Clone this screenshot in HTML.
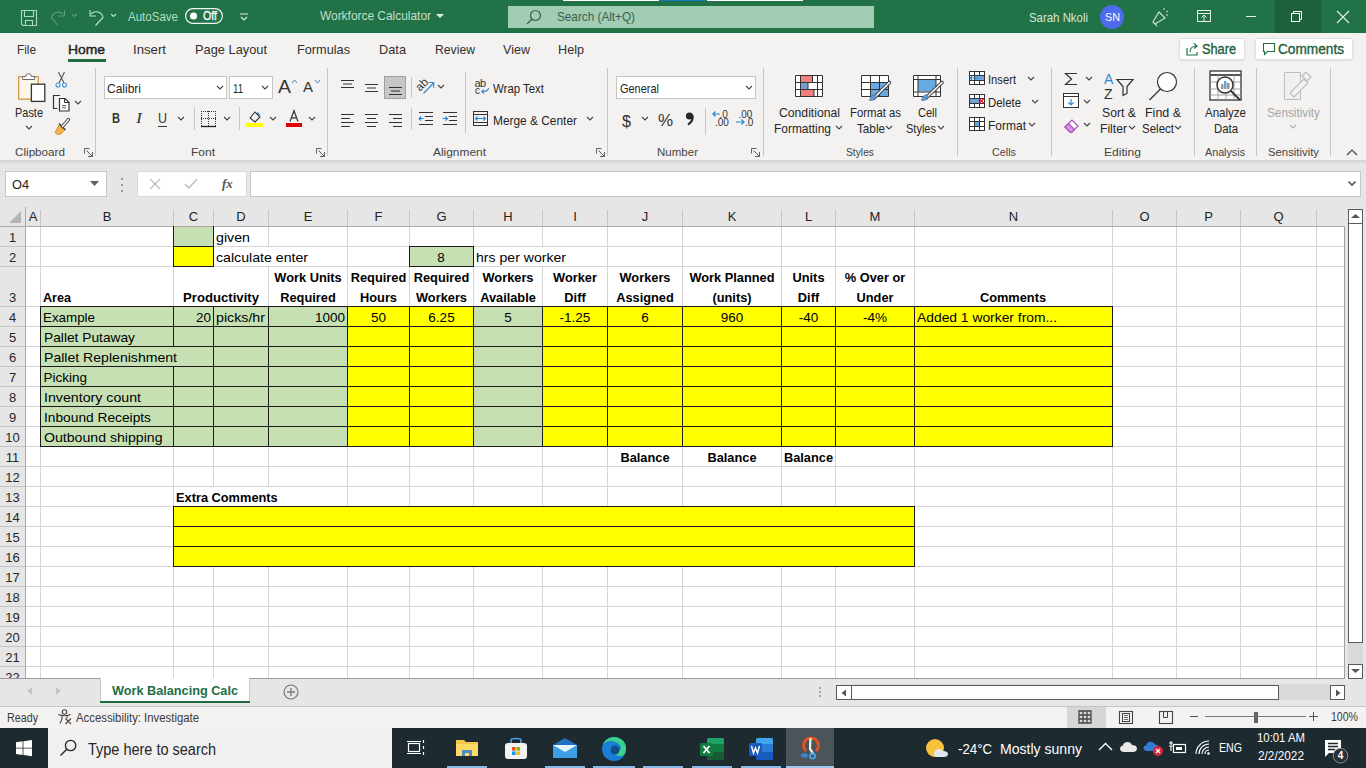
<!DOCTYPE html><html><head><meta charset="utf-8"><style>
html,body{margin:0;padding:0;width:1366px;height:768px;overflow:hidden;background:#fff;}
body{position:relative;font-family:"Liberation Sans",sans-serif;}
div{position:absolute;box-sizing:border-box;}
</style></head><body>
<div style="left:0px;top:0px;width:1366px;height:34px;background:#217247;"></div>
<div style="left:563px;top:0px;width:96px;height:1px;background:#ffffff;"></div>
<div style="left:660px;top:0px;width:46px;height:1px;background:#1a75b8;"></div>
<div style="left:707px;top:0px;width:96px;height:1px;background:#ffffff;"></div>
<svg style="position:absolute;left:10px;top:2px;" width="120" height="30" viewBox="0 0 120 30"><g fill="none" stroke-width="1.1"><path d="M11.5 8.5h15v15h-13.5l-1.5-1.5z M14.5 8.5v6h9v-6 M15.5 23.5v-5h7v5" stroke="#aadcbb"/><path d="M53 12A7 7 0 0 0 41.5 15.5L48 23.5 M54.5 8v6h-6" stroke="#5f9d77"/><path d="M62 12l2.5 2.5 2.5-2.5" stroke="#5f9d77"/><path d="M81 12A7 7 0 0 1 93 15.5L85.5 23.5 M80 8v6h6" stroke="#b8e4c6"/><path d="M101 12l2.5 2.5 2.5-2.5" stroke="#b8e4c6"/></g></svg>
<div style="left:128.00px;top:10.23px;font-size:13px;line-height:14.521px;color:#b2dcc0;transform:scaleX(0.8869);transform-origin:0 0;white-space:pre;">AutoSave</div>
<svg style="position:absolute;left:185px;top:8px;" width="38" height="16" viewBox="0 0 38 16"><rect x="0.6" y="0.6" width="36.8" height="14.8" rx="7.4" fill="none" stroke="#f0f6f2" stroke-width="1.2"/><circle cx="8.5" cy="8" r="3.6" fill="#fff"/></svg>
<div style="left:203.00px;top:10.14px;font-size:12px;line-height:13.404px;color:#fff;transform:scaleX(0.8869);transform-origin:0 0;white-space:pre;-webkit-text-stroke:0.3px #fff;">Off</div>
<svg style="position:absolute;left:239px;top:12px;" width="10" height="10" viewBox="0 0 10 10"><path d="M1 2h8 M2 5l3 3 3-3" fill="none" stroke="#e0eee5" stroke-width="1.1"/></svg>
<div style="left:320.00px;top:9.23px;font-size:13px;line-height:14.521px;color:#c3dfcd;transform:scaleX(0.9163);transform-origin:0 0;white-space:pre;">Workforce Calculator</div>
<svg style="position:absolute;left:436px;top:14px;" width="8" height="6" viewBox="0 0 8 6"><path d="M0 0h8l-4 4z" fill="#dfeee5"/></svg>
<div style="left:508px;top:6px;width:366px;height:22px;background:#a0cdb4;"></div>
<svg style="position:absolute;left:524px;top:8px;" width="20" height="18" viewBox="0 0 20 18"><circle cx="11.5" cy="7.5" r="5" fill="none" stroke="#3d5e4a" stroke-width="1.2"/><path d="M8 11l-5 5" stroke="#3d5e4a" stroke-width="1.3"/></svg>
<div style="left:557.00px;top:10.23px;font-size:13px;line-height:14.521px;color:#3e5f4b;transform:scaleX(0.9034);transform-origin:0 0;white-space:pre;">Search (Alt+Q)</div>
<div style="left:1029.00px;top:10.73px;font-size:13px;line-height:14.521px;color:#d3e7da;transform:scaleX(0.8780);transform-origin:0 0;white-space:pre;">Sarah Nkoli</div>
<svg style="position:absolute;left:1100px;top:5px;" width="24" height="24" viewBox="0 0 24 24"><circle cx="12" cy="12" r="12" fill="#4f6bed"/></svg>
<div style="left:1104.50px;top:11.04px;font-size:11px;line-height:12.287px;color:#fff;transform:scaleX(0.9816);transform-origin:0 0;white-space:pre;">SN</div>
<svg style="position:absolute;left:1150px;top:7px;" width="20" height="20" viewBox="0 0 20 20"><path d="M3 15l2 2 10-6-6-6z M5 17l2 2" fill="none" stroke="#cfe3d6" stroke-width="1.1"/><path d="M14 3v-2 M16 5l2-1 M16 8h2" stroke="#cfe3d6" stroke-width="1"/></svg>
<svg style="position:absolute;left:1196px;top:9px;" width="18" height="15" viewBox="0 0 18 15"><rect x="1.5" y="1.5" width="13" height="11" fill="none" stroke="#e3efe8" stroke-width="1"/><path d="M1.5 4.5h13 M8 12v-6 M5.5 8.5l2.5-2.5 2.5 2.5" fill="none" stroke="#e3efe8" stroke-width="1"/></svg>
<div style="left:1246px;top:16px;width:10px;height:1px;background:#e8f2ec;"></div>
<div style="left:1275px;top:0px;width:46px;height:33px;background:#1c6139;"></div>
<svg style="position:absolute;left:1290px;top:10px;" width="14" height="14" viewBox="0 0 14 14"><rect x="1.5" y="3.5" width="8" height="8" fill="none" stroke="#fff" stroke-width="1"/><path d="M3.5 3.5v-2h8v8h-2" fill="none" stroke="#fff" stroke-width="1"/></svg>
<svg style="position:absolute;left:1336px;top:10px;" width="14" height="14" viewBox="0 0 14 14"><path d="M1 1l12 12 M13 1l-12 12" stroke="#e8f2ec" stroke-width="1.1"/></svg>
<div style="left:0px;top:33px;width:1366px;height:127px;background:#f3f2f1;"></div>
<div style="left:17.00px;top:43.23px;font-size:13px;line-height:14.521px;color:#323130;transform:scaleX(0.9070);transform-origin:0 0;white-space:pre;">File</div>
<div style="left:68.00px;top:43.23px;font-size:13px;line-height:14.521px;color:#201f1e;transform:scaleX(1.0669);transform-origin:0 0;white-space:pre;-webkit-text-stroke:0.4px #201f1e;">Home</div>
<div style="left:133.00px;top:43.23px;font-size:13px;line-height:14.521px;color:#323130;transform:scaleX(1.0150);transform-origin:0 0;white-space:pre;">Insert</div>
<div style="left:195.00px;top:43.23px;font-size:13px;line-height:14.521px;color:#323130;transform:scaleX(0.9862);transform-origin:0 0;white-space:pre;">Page Layout</div>
<div style="left:297.00px;top:43.23px;font-size:13px;line-height:14.521px;color:#323130;transform:scaleX(0.9782);transform-origin:0 0;white-space:pre;">Formulas</div>
<div style="left:379.00px;top:43.23px;font-size:13px;line-height:14.521px;color:#323130;transform:scaleX(0.9832);transform-origin:0 0;white-space:pre;">Data</div>
<div style="left:435.00px;top:43.23px;font-size:13px;line-height:14.521px;color:#323130;transform:scaleX(0.9384);transform-origin:0 0;white-space:pre;">Review</div>
<div style="left:503.00px;top:43.23px;font-size:13px;line-height:14.521px;color:#323130;transform:scaleX(0.9662);transform-origin:0 0;white-space:pre;">View</div>
<div style="left:558.00px;top:43.23px;font-size:13px;line-height:14.521px;color:#323130;transform:scaleX(0.9724);transform-origin:0 0;white-space:pre;">Help</div>
<div style="left:68px;top:59px;width:38px;height:3px;background:#1e6e42;"></div>
<div style="left:1179px;top:38px;width:66px;height:22px;background:#ffffff;border:1px solid #e1dfdd;border-radius:3px;box-shadow:0 1px 2px rgba(0,0,0,0.08);"></div>
<svg style="position:absolute;left:1185px;top:42px;" width="14" height="14" viewBox="0 0 14 14"><path d="M2 6v7h10v-3" fill="none" stroke="#1e6e42" stroke-width="1.2"/><path d="M5 10c0-4 3-6 7-6 M9 1.5l3 2.5-3 2.5" fill="none" stroke="#1e6e42" stroke-width="1.2"/></svg>
<div style="left:1202.00px;top:42.33px;font-size:14px;line-height:15.638px;color:#1e5e3b;transform:scaleX(0.9101);transform-origin:0 0;white-space:pre;-webkit-text-stroke:0.35px #1e5e3b;">Share</div>
<div style="left:1255px;top:38px;width:98px;height:22px;background:#ffffff;border:1px solid #e1dfdd;border-radius:3px;box-shadow:0 1px 2px rgba(0,0,0,0.08);"></div>
<svg style="position:absolute;left:1262px;top:42px;" width="14" height="14" viewBox="0 0 14 14"><path d="M1.5 1.5h11v8h-7l-3 3v-3h-1z" fill="none" stroke="#1e6e42" stroke-width="1.1"/></svg>
<div style="left:1278.00px;top:42.33px;font-size:14px;line-height:15.638px;color:#1e5e3b;transform:scaleX(0.9751);transform-origin:0 0;white-space:pre;-webkit-text-stroke:0.35px #1e5e3b;">Comments</div>
<div style="left:0px;top:160px;width:1366px;height:47px;background:#e6e6e6;"></div>
<div style="left:0px;top:160px;width:1366px;height:4px;background:linear-gradient(#d2d2d2,#e6e6e6);"></div>
<div style="left:5px;top:171px;width:102px;height:26px;background:#fff;border:1px solid #c8c8c8;"></div>
<div style="left:12.00px;top:178.24px;font-size:13px;line-height:14.521px;color:#222;transform:scaleX(0.9803);transform-origin:0 0;white-space:pre;">O4</div>
<svg style="position:absolute;left:90px;top:181px;" width="10" height="6" viewBox="0 0 10 6"><path d="M0 0h9l-4.5 5z" fill="#606060"/></svg>
<div style="left:121px;top:178px;width:2px;height:2px;background:#9a9a9a;"></div>
<div style="left:121px;top:184px;width:2px;height:2px;background:#9a9a9a;"></div>
<div style="left:121px;top:190px;width:2px;height:2px;background:#9a9a9a;"></div>
<div style="left:137px;top:171px;width:110px;height:26px;background:#fff;border:1px solid #d8d8d8;"></div>
<svg style="position:absolute;left:148px;top:177px;" width="14" height="14" viewBox="0 0 14 14"><path d="M2 2l10 10 M12 2l-10 10" stroke="#bdbdbd" stroke-width="1.2"/></svg>
<svg style="position:absolute;left:183px;top:177px;" width="16" height="14" viewBox="0 0 16 14"><path d="M2 7l4 4 8-9" fill="none" stroke="#bdbdbd" stroke-width="1.5"/></svg>
<div style="left:222.00px;top:177.24px;font-size:13px;line-height:14.521px;color:#555;white-space:pre;font-style:italic;font-family:'Liberation Serif',serif;font-weight:bold;">fx</div>
<div style="left:250px;top:171px;width:1111px;height:26px;background:#fff;border:1px solid #c6c6c6;"></div>
<svg style="position:absolute;left:1347px;top:180px;" width="10" height="7" viewBox="0 0 10 7"><path d="M1.5 1.5l3.5 3.5 3.5-3.5" fill="none" stroke="#555" stroke-width="1.6"/></svg>
<div style="left:0px;top:207px;width:1366px;height:471px;background:#ffffff;"></div>
<div style="left:0px;top:207px;width:1345px;height:20px;background:#e6e6e6;"></div>
<div style="left:0px;top:207px;width:25px;height:471px;background:#e6e6e6;"></div>
<div style="left:26px;top:246px;width:1319px;height:1px;background:#d4d4d4;"></div>
<div style="left:26px;top:266px;width:1319px;height:1px;background:#d4d4d4;"></div>
<div style="left:26px;top:306px;width:1319px;height:1px;background:#d4d4d4;"></div>
<div style="left:26px;top:326px;width:1319px;height:1px;background:#d4d4d4;"></div>
<div style="left:26px;top:346px;width:1319px;height:1px;background:#d4d4d4;"></div>
<div style="left:26px;top:366px;width:1319px;height:1px;background:#d4d4d4;"></div>
<div style="left:26px;top:386px;width:1319px;height:1px;background:#d4d4d4;"></div>
<div style="left:26px;top:406px;width:1319px;height:1px;background:#d4d4d4;"></div>
<div style="left:26px;top:426px;width:1319px;height:1px;background:#d4d4d4;"></div>
<div style="left:26px;top:446px;width:1319px;height:1px;background:#d4d4d4;"></div>
<div style="left:26px;top:466px;width:1319px;height:1px;background:#d4d4d4;"></div>
<div style="left:26px;top:486px;width:1319px;height:1px;background:#d4d4d4;"></div>
<div style="left:26px;top:506px;width:1319px;height:1px;background:#d4d4d4;"></div>
<div style="left:26px;top:526px;width:1319px;height:1px;background:#d4d4d4;"></div>
<div style="left:26px;top:546px;width:1319px;height:1px;background:#d4d4d4;"></div>
<div style="left:26px;top:566px;width:1319px;height:1px;background:#d4d4d4;"></div>
<div style="left:26px;top:586px;width:1319px;height:1px;background:#d4d4d4;"></div>
<div style="left:26px;top:606px;width:1319px;height:1px;background:#d4d4d4;"></div>
<div style="left:26px;top:626px;width:1319px;height:1px;background:#d4d4d4;"></div>
<div style="left:26px;top:646px;width:1319px;height:1px;background:#d4d4d4;"></div>
<div style="left:26px;top:666px;width:1319px;height:1px;background:#d4d4d4;"></div>
<div style="left:40px;top:227px;width:1px;height:451px;background:#d4d4d4;"></div>
<div style="left:173px;top:227px;width:1px;height:451px;background:#d4d4d4;"></div>
<div style="left:213px;top:227px;width:1px;height:451px;background:#d4d4d4;"></div>
<div style="left:268px;top:227px;width:1px;height:451px;background:#d4d4d4;"></div>
<div style="left:347px;top:227px;width:1px;height:451px;background:#d4d4d4;"></div>
<div style="left:409px;top:227px;width:1px;height:451px;background:#d4d4d4;"></div>
<div style="left:473px;top:227px;width:1px;height:451px;background:#d4d4d4;"></div>
<div style="left:542px;top:227px;width:1px;height:451px;background:#d4d4d4;"></div>
<div style="left:607px;top:227px;width:1px;height:451px;background:#d4d4d4;"></div>
<div style="left:682px;top:227px;width:1px;height:451px;background:#d4d4d4;"></div>
<div style="left:781px;top:227px;width:1px;height:451px;background:#d4d4d4;"></div>
<div style="left:835px;top:227px;width:1px;height:451px;background:#d4d4d4;"></div>
<div style="left:914px;top:227px;width:1px;height:451px;background:#d4d4d4;"></div>
<div style="left:1112px;top:227px;width:1px;height:451px;background:#d4d4d4;"></div>
<div style="left:1176px;top:227px;width:1px;height:451px;background:#d4d4d4;"></div>
<div style="left:1240px;top:227px;width:1px;height:451px;background:#d4d4d4;"></div>
<div style="left:1316px;top:227px;width:1px;height:451px;background:#d4d4d4;"></div>
<div style="left:0px;top:226px;width:1345px;height:1px;background:#ababab;"></div>
<div style="left:25px;top:207px;width:1px;height:471px;background:#ababab;"></div>
<div style="left:40px;top:210px;width:1px;height:16px;background:#c6c6c6;"></div>
<div style="left:173px;top:210px;width:1px;height:16px;background:#c6c6c6;"></div>
<div style="left:213px;top:210px;width:1px;height:16px;background:#c6c6c6;"></div>
<div style="left:268px;top:210px;width:1px;height:16px;background:#c6c6c6;"></div>
<div style="left:347px;top:210px;width:1px;height:16px;background:#c6c6c6;"></div>
<div style="left:409px;top:210px;width:1px;height:16px;background:#c6c6c6;"></div>
<div style="left:473px;top:210px;width:1px;height:16px;background:#c6c6c6;"></div>
<div style="left:542px;top:210px;width:1px;height:16px;background:#c6c6c6;"></div>
<div style="left:607px;top:210px;width:1px;height:16px;background:#c6c6c6;"></div>
<div style="left:682px;top:210px;width:1px;height:16px;background:#c6c6c6;"></div>
<div style="left:781px;top:210px;width:1px;height:16px;background:#c6c6c6;"></div>
<div style="left:835px;top:210px;width:1px;height:16px;background:#c6c6c6;"></div>
<div style="left:914px;top:210px;width:1px;height:16px;background:#c6c6c6;"></div>
<div style="left:1112px;top:210px;width:1px;height:16px;background:#c6c6c6;"></div>
<div style="left:1176px;top:210px;width:1px;height:16px;background:#c6c6c6;"></div>
<div style="left:1240px;top:210px;width:1px;height:16px;background:#c6c6c6;"></div>
<div style="left:1316px;top:210px;width:1px;height:16px;background:#c6c6c6;"></div>
<div style="left:0px;top:246px;width:25px;height:1px;background:#c6c6c6;"></div>
<div style="left:0px;top:266px;width:25px;height:1px;background:#c6c6c6;"></div>
<div style="left:0px;top:306px;width:25px;height:1px;background:#c6c6c6;"></div>
<div style="left:0px;top:326px;width:25px;height:1px;background:#c6c6c6;"></div>
<div style="left:0px;top:346px;width:25px;height:1px;background:#c6c6c6;"></div>
<div style="left:0px;top:366px;width:25px;height:1px;background:#c6c6c6;"></div>
<div style="left:0px;top:386px;width:25px;height:1px;background:#c6c6c6;"></div>
<div style="left:0px;top:406px;width:25px;height:1px;background:#c6c6c6;"></div>
<div style="left:0px;top:426px;width:25px;height:1px;background:#c6c6c6;"></div>
<div style="left:0px;top:446px;width:25px;height:1px;background:#c6c6c6;"></div>
<div style="left:0px;top:466px;width:25px;height:1px;background:#c6c6c6;"></div>
<div style="left:0px;top:486px;width:25px;height:1px;background:#c6c6c6;"></div>
<div style="left:0px;top:506px;width:25px;height:1px;background:#c6c6c6;"></div>
<div style="left:0px;top:526px;width:25px;height:1px;background:#c6c6c6;"></div>
<div style="left:0px;top:546px;width:25px;height:1px;background:#c6c6c6;"></div>
<div style="left:0px;top:566px;width:25px;height:1px;background:#c6c6c6;"></div>
<div style="left:0px;top:586px;width:25px;height:1px;background:#c6c6c6;"></div>
<div style="left:0px;top:606px;width:25px;height:1px;background:#c6c6c6;"></div>
<div style="left:0px;top:626px;width:25px;height:1px;background:#c6c6c6;"></div>
<div style="left:0px;top:646px;width:25px;height:1px;background:#c6c6c6;"></div>
<div style="left:0px;top:666px;width:25px;height:1px;background:#c6c6c6;"></div>
<svg style="position:absolute;left:8px;top:210px;" width="14" height="14" viewBox="0 0 14 14"><path d="M13 1v12h-12z" fill="#b4b4b4"/></svg>
<div style="left:28.66px;top:210.24px;font-size:13px;line-height:14.521px;color:#222;white-space:pre;">A</div>
<div style="left:102.66px;top:210.24px;font-size:13px;line-height:14.521px;color:#222;white-space:pre;">B</div>
<div style="left:188.81px;top:210.24px;font-size:13px;line-height:14.521px;color:#222;white-space:pre;">C</div>
<div style="left:236.31px;top:210.24px;font-size:13px;line-height:14.521px;color:#222;white-space:pre;">D</div>
<div style="left:303.66px;top:210.24px;font-size:13px;line-height:14.521px;color:#222;white-space:pre;">E</div>
<div style="left:374.53px;top:210.24px;font-size:13px;line-height:14.521px;color:#222;white-space:pre;">F</div>
<div style="left:436.44px;top:210.24px;font-size:13px;line-height:14.521px;color:#222;white-space:pre;">G</div>
<div style="left:503.31px;top:210.24px;font-size:13px;line-height:14.521px;color:#222;white-space:pre;">H</div>
<div style="left:573.19px;top:210.24px;font-size:13px;line-height:14.521px;color:#222;white-space:pre;">I</div>
<div style="left:641.75px;top:210.24px;font-size:13px;line-height:14.521px;color:#222;white-space:pre;">J</div>
<div style="left:727.66px;top:210.24px;font-size:13px;line-height:14.521px;color:#222;white-space:pre;">K</div>
<div style="left:804.88px;top:210.24px;font-size:13px;line-height:14.521px;color:#222;white-space:pre;">L</div>
<div style="left:869.59px;top:210.24px;font-size:13px;line-height:14.521px;color:#222;white-space:pre;">M</div>
<div style="left:1008.81px;top:210.24px;font-size:13px;line-height:14.521px;color:#222;white-space:pre;">N</div>
<div style="left:1139.44px;top:210.24px;font-size:13px;line-height:14.521px;color:#222;white-space:pre;">O</div>
<div style="left:1204.16px;top:210.24px;font-size:13px;line-height:14.521px;color:#222;white-space:pre;">P</div>
<div style="left:1273.44px;top:210.24px;font-size:13px;line-height:14.521px;color:#222;white-space:pre;">Q</div>
<div style="left:8.88px;top:231.24px;font-size:13px;line-height:14.521px;color:#262626;white-space:pre;">1</div>
<div style="left:8.88px;top:251.24px;font-size:13px;line-height:14.521px;color:#262626;white-space:pre;">2</div>
<div style="left:8.88px;top:291.24px;font-size:13px;line-height:14.521px;color:#262626;white-space:pre;">3</div>
<div style="left:8.88px;top:311.24px;font-size:13px;line-height:14.521px;color:#262626;white-space:pre;">4</div>
<div style="left:8.88px;top:331.24px;font-size:13px;line-height:14.521px;color:#262626;white-space:pre;">5</div>
<div style="left:8.88px;top:351.24px;font-size:13px;line-height:14.521px;color:#262626;white-space:pre;">6</div>
<div style="left:8.88px;top:371.24px;font-size:13px;line-height:14.521px;color:#262626;white-space:pre;">7</div>
<div style="left:8.88px;top:391.24px;font-size:13px;line-height:14.521px;color:#262626;white-space:pre;">8</div>
<div style="left:8.88px;top:411.24px;font-size:13px;line-height:14.521px;color:#262626;white-space:pre;">9</div>
<div style="left:5.27px;top:431.24px;font-size:13px;line-height:14.521px;color:#262626;white-space:pre;">10</div>
<div style="left:5.75px;top:451.24px;font-size:13px;line-height:14.521px;color:#262626;white-space:pre;">11</div>
<div style="left:5.27px;top:471.24px;font-size:13px;line-height:14.521px;color:#262626;white-space:pre;">12</div>
<div style="left:5.27px;top:491.24px;font-size:13px;line-height:14.521px;color:#262626;white-space:pre;">13</div>
<div style="left:5.27px;top:511.24px;font-size:13px;line-height:14.521px;color:#262626;white-space:pre;">14</div>
<div style="left:5.27px;top:531.24px;font-size:13px;line-height:14.521px;color:#262626;white-space:pre;">15</div>
<div style="left:5.27px;top:551.24px;font-size:13px;line-height:14.521px;color:#262626;white-space:pre;">16</div>
<div style="left:5.27px;top:571.24px;font-size:13px;line-height:14.521px;color:#262626;white-space:pre;">17</div>
<div style="left:5.27px;top:591.24px;font-size:13px;line-height:14.521px;color:#262626;white-space:pre;">18</div>
<div style="left:5.27px;top:611.24px;font-size:13px;line-height:14.521px;color:#262626;white-space:pre;">19</div>
<div style="left:5.27px;top:631.24px;font-size:13px;line-height:14.521px;color:#262626;white-space:pre;">20</div>
<div style="left:5.27px;top:651.24px;font-size:13px;line-height:14.521px;color:#262626;white-space:pre;">21</div>
<div style="left:5.27px;top:671.24px;font-size:13px;line-height:14.521px;color:#262626;white-space:pre;">22</div>
<div style="left:174px;top:227px;width:39px;height:19px;background:#c6e0b4;"></div>
<div style="left:174px;top:247px;width:39px;height:19px;background:#ffff00;"></div>
<div style="left:410px;top:247px;width:63px;height:19px;background:#c6e0b4;"></div>
<div style="left:41px;top:307px;width:306px;height:19px;background:#c6e0b4;"></div>
<div style="left:348px;top:307px;width:125px;height:19px;background:#ffff00;"></div>
<div style="left:474px;top:307px;width:68px;height:19px;background:#c6e0b4;"></div>
<div style="left:543px;top:307px;width:569px;height:19px;background:#ffff00;"></div>
<div style="left:41px;top:327px;width:306px;height:19px;background:#c6e0b4;"></div>
<div style="left:348px;top:327px;width:125px;height:19px;background:#ffff00;"></div>
<div style="left:474px;top:327px;width:68px;height:19px;background:#c6e0b4;"></div>
<div style="left:543px;top:327px;width:569px;height:19px;background:#ffff00;"></div>
<div style="left:41px;top:347px;width:306px;height:19px;background:#c6e0b4;"></div>
<div style="left:348px;top:347px;width:125px;height:19px;background:#ffff00;"></div>
<div style="left:474px;top:347px;width:68px;height:19px;background:#c6e0b4;"></div>
<div style="left:543px;top:347px;width:569px;height:19px;background:#ffff00;"></div>
<div style="left:41px;top:367px;width:306px;height:19px;background:#c6e0b4;"></div>
<div style="left:348px;top:367px;width:125px;height:19px;background:#ffff00;"></div>
<div style="left:474px;top:367px;width:68px;height:19px;background:#c6e0b4;"></div>
<div style="left:543px;top:367px;width:569px;height:19px;background:#ffff00;"></div>
<div style="left:41px;top:387px;width:306px;height:19px;background:#c6e0b4;"></div>
<div style="left:348px;top:387px;width:125px;height:19px;background:#ffff00;"></div>
<div style="left:474px;top:387px;width:68px;height:19px;background:#c6e0b4;"></div>
<div style="left:543px;top:387px;width:569px;height:19px;background:#ffff00;"></div>
<div style="left:41px;top:407px;width:306px;height:19px;background:#c6e0b4;"></div>
<div style="left:348px;top:407px;width:125px;height:19px;background:#ffff00;"></div>
<div style="left:474px;top:407px;width:68px;height:19px;background:#c6e0b4;"></div>
<div style="left:543px;top:407px;width:569px;height:19px;background:#ffff00;"></div>
<div style="left:41px;top:427px;width:306px;height:19px;background:#c6e0b4;"></div>
<div style="left:348px;top:427px;width:125px;height:19px;background:#ffff00;"></div>
<div style="left:474px;top:427px;width:68px;height:19px;background:#c6e0b4;"></div>
<div style="left:543px;top:427px;width:569px;height:19px;background:#ffff00;"></div>
<div style="left:174px;top:507px;width:740px;height:19px;background:#ffff00;"></div>
<div style="left:174px;top:527px;width:740px;height:19px;background:#ffff00;"></div>
<div style="left:174px;top:547px;width:740px;height:19px;background:#ffff00;"></div>
<div style="left:268px;top:247px;width:1px;height:19px;background:#ffffff;"></div>
<div style="left:542px;top:247px;width:1px;height:19px;background:#ffffff;"></div>
<div style="left:213px;top:267px;width:1px;height:39px;background:#ffffff;"></div>
<div style="left:213px;top:487px;width:1px;height:19px;background:#ffffff;"></div>
<div style="left:268px;top:487px;width:1px;height:19px;background:#ffffff;"></div>
<div style="left:173px;top:226px;width:1px;height:41px;background:#1a1a1a;"></div>
<div style="left:213px;top:226px;width:1px;height:41px;background:#1a1a1a;"></div>
<div style="left:173px;top:246px;width:41px;height:1px;background:#1a1a1a;"></div>
<div style="left:173px;top:266px;width:41px;height:1px;background:#1a1a1a;"></div>
<div style="left:409px;top:246px;width:1px;height:21px;background:#1a1a1a;"></div>
<div style="left:473px;top:246px;width:1px;height:21px;background:#1a1a1a;"></div>
<div style="left:409px;top:246px;width:65px;height:1px;background:#1a1a1a;"></div>
<div style="left:409px;top:266px;width:65px;height:1px;background:#1a1a1a;"></div>
<div style="left:40px;top:306px;width:1073px;height:1px;background:#1a1a1a;"></div>
<div style="left:40px;top:326px;width:1073px;height:1px;background:#1a1a1a;"></div>
<div style="left:40px;top:346px;width:1073px;height:1px;background:#1a1a1a;"></div>
<div style="left:40px;top:366px;width:1073px;height:1px;background:#1a1a1a;"></div>
<div style="left:40px;top:386px;width:1073px;height:1px;background:#1a1a1a;"></div>
<div style="left:40px;top:406px;width:1073px;height:1px;background:#1a1a1a;"></div>
<div style="left:40px;top:426px;width:1073px;height:1px;background:#1a1a1a;"></div>
<div style="left:40px;top:446px;width:1073px;height:1px;background:#1a1a1a;"></div>
<div style="left:40px;top:306px;width:1px;height:141px;background:#1a1a1a;"></div>
<div style="left:173px;top:306px;width:1px;height:41px;background:#1a1a1a;"></div>
<div style="left:173px;top:366px;width:1px;height:81px;background:#1a1a1a;"></div>
<div style="left:213px;top:306px;width:1px;height:141px;background:#1a1a1a;"></div>
<div style="left:268px;top:306px;width:1px;height:141px;background:#1a1a1a;"></div>
<div style="left:347px;top:306px;width:1px;height:141px;background:#1a1a1a;"></div>
<div style="left:409px;top:306px;width:1px;height:141px;background:#1a1a1a;"></div>
<div style="left:473px;top:306px;width:1px;height:141px;background:#1a1a1a;"></div>
<div style="left:542px;top:306px;width:1px;height:141px;background:#1a1a1a;"></div>
<div style="left:607px;top:306px;width:1px;height:141px;background:#1a1a1a;"></div>
<div style="left:682px;top:306px;width:1px;height:141px;background:#1a1a1a;"></div>
<div style="left:781px;top:306px;width:1px;height:141px;background:#1a1a1a;"></div>
<div style="left:835px;top:306px;width:1px;height:141px;background:#1a1a1a;"></div>
<div style="left:914px;top:306px;width:1px;height:141px;background:#1a1a1a;"></div>
<div style="left:1112px;top:306px;width:1px;height:141px;background:#1a1a1a;"></div>
<div style="left:173px;top:506px;width:742px;height:1px;background:#1a1a1a;"></div>
<div style="left:173px;top:526px;width:742px;height:1px;background:#1a1a1a;"></div>
<div style="left:173px;top:546px;width:742px;height:1px;background:#1a1a1a;"></div>
<div style="left:173px;top:566px;width:742px;height:1px;background:#1a1a1a;"></div>
<div style="left:173px;top:506px;width:1px;height:61px;background:#1a1a1a;"></div>
<div style="left:914px;top:506px;width:1px;height:61px;background:#1a1a1a;"></div>
<div style="left:216.00px;top:229.78px;font-size:13.5px;line-height:15.079px;color:#000;transform:scaleX(1.0535);transform-origin:0 0;white-space:pre;">given</div>
<div style="left:216.00px;top:249.78px;font-size:13.5px;line-height:15.079px;color:#000;transform:scaleX(1.0478);transform-origin:0 0;white-space:pre;">calculate enter</div>
<div style="left:437.25px;top:249.78px;font-size:13.5px;line-height:15.079px;color:#000;white-space:pre;">8</div>
<div style="left:476.00px;top:249.78px;font-size:13.5px;line-height:15.079px;color:#000;transform:scaleX(1.0432);transform-origin:0 0;white-space:pre;">hrs per worker</div>
<div style="left:43.00px;top:291.42px;font-size:12.8px;line-height:14.298px;color:#000;font-weight:bold;transform:scaleX(0.9837);transform-origin:0 0;white-space:pre;">Area</div>
<div style="left:183.00px;top:291.42px;font-size:12.8px;line-height:14.298px;color:#000;font-weight:bold;transform:scaleX(1.0274);transform-origin:0 0;white-space:pre;">Productivity</div>
<div style="left:274.34px;top:271.42px;font-size:12.8px;line-height:14.298px;color:#000;font-weight:bold;white-space:pre;">Work Units</div>
<div style="left:280.26px;top:291.42px;font-size:12.8px;line-height:14.298px;color:#000;font-weight:bold;white-space:pre;">Required</div>
<div style="left:350.76px;top:271.42px;font-size:12.8px;line-height:14.298px;color:#000;font-weight:bold;white-space:pre;">Required</div>
<div style="left:360.01px;top:291.42px;font-size:12.8px;line-height:14.298px;color:#000;font-weight:bold;white-space:pre;">Hours</div>
<div style="left:413.76px;top:271.42px;font-size:12.8px;line-height:14.298px;color:#000;font-weight:bold;white-space:pre;">Required</div>
<div style="left:416.01px;top:291.42px;font-size:12.8px;line-height:14.298px;color:#000;font-weight:bold;white-space:pre;">Workers</div>
<div style="left:482.51px;top:271.42px;font-size:12.8px;line-height:14.298px;color:#000;font-weight:bold;white-space:pre;">Workers</div>
<div style="left:480.13px;top:291.42px;font-size:12.8px;line-height:14.298px;color:#000;font-weight:bold;white-space:pre;">Available</div>
<div style="left:553.07px;top:271.42px;font-size:12.8px;line-height:14.298px;color:#000;font-weight:bold;white-space:pre;">Worker</div>
<div style="left:564.34px;top:291.42px;font-size:12.8px;line-height:14.298px;color:#000;font-weight:bold;white-space:pre;">Diff</div>
<div style="left:619.51px;top:271.42px;font-size:12.8px;line-height:14.298px;color:#000;font-weight:bold;white-space:pre;">Workers</div>
<div style="left:616.19px;top:291.42px;font-size:12.8px;line-height:14.298px;color:#000;font-weight:bold;white-space:pre;">Assigned</div>
<div style="left:689.44px;top:271.42px;font-size:12.8px;line-height:14.298px;color:#000;font-weight:bold;white-space:pre;">Work Planned</div>
<div style="left:712.45px;top:291.42px;font-size:12.8px;line-height:14.298px;color:#000;font-weight:bold;white-space:pre;">(units)</div>
<div style="left:792.50px;top:271.42px;font-size:12.8px;line-height:14.298px;color:#000;font-weight:bold;white-space:pre;">Units</div>
<div style="left:797.84px;top:291.42px;font-size:12.8px;line-height:14.298px;color:#000;font-weight:bold;white-space:pre;">Diff</div>
<div style="left:844.77px;top:271.42px;font-size:12.8px;line-height:14.298px;color:#000;font-weight:bold;white-space:pre;">% Over or</div>
<div style="left:856.51px;top:291.42px;font-size:12.8px;line-height:14.298px;color:#000;font-weight:bold;white-space:pre;">Under</div>
<div style="left:979.93px;top:291.42px;font-size:12.8px;line-height:14.298px;color:#000;font-weight:bold;white-space:pre;">Comments</div>
<div style="left:43.00px;top:309.78px;font-size:13.5px;line-height:15.079px;color:#000;transform:scaleX(0.9900);transform-origin:0 0;white-space:pre;">Example</div>
<div style="left:195.98px;top:309.78px;font-size:13.5px;line-height:15.079px;color:#000;white-space:pre;">20</div>
<div style="left:216.00px;top:309.78px;font-size:13.5px;line-height:15.079px;color:#000;transform:scaleX(1.0535);transform-origin:0 0;white-space:pre;">picks/hr</div>
<div style="left:314.97px;top:309.78px;font-size:13.5px;line-height:15.079px;color:#000;white-space:pre;">1000</div>
<div style="left:370.99px;top:309.78px;font-size:13.5px;line-height:15.079px;color:#000;white-space:pre;">50</div>
<div style="left:428.36px;top:309.78px;font-size:13.5px;line-height:15.079px;color:#000;white-space:pre;">6.25</div>
<div style="left:504.25px;top:309.78px;font-size:13.5px;line-height:15.079px;color:#000;white-space:pre;">5</div>
<div style="left:559.61px;top:309.78px;font-size:13.5px;line-height:15.079px;color:#000;white-space:pre;">-1.25</div>
<div style="left:641.25px;top:309.78px;font-size:13.5px;line-height:15.079px;color:#000;white-space:pre;">6</div>
<div style="left:720.74px;top:309.78px;font-size:13.5px;line-height:15.079px;color:#000;white-space:pre;">960</div>
<div style="left:798.74px;top:309.78px;font-size:13.5px;line-height:15.079px;color:#000;white-space:pre;">-40</div>
<div style="left:863.00px;top:309.78px;font-size:13.5px;line-height:15.079px;color:#000;white-space:pre;">-4%</div>
<div style="left:917.00px;top:309.78px;font-size:13.5px;line-height:15.079px;color:#000;transform:scaleX(1.0252);transform-origin:0 0;white-space:pre;">Added 1 worker from...</div>
<div style="left:43.50px;top:329.78px;font-size:13.5px;line-height:15.079px;color:#000;transform:scaleX(1.0190);transform-origin:0 0;white-space:pre;">Pallet Putaway</div>
<div style="left:43.50px;top:349.78px;font-size:13.5px;line-height:15.079px;color:#000;transform:scaleX(1.0425);transform-origin:0 0;white-space:pre;">Pallet Replenishment</div>
<div style="left:43.50px;top:369.78px;font-size:13.5px;line-height:15.079px;color:#000;white-space:pre;">Picking</div>
<div style="left:43.50px;top:389.78px;font-size:13.5px;line-height:15.079px;color:#000;transform:scaleX(1.0508);transform-origin:0 0;white-space:pre;">Inventory count</div>
<div style="left:43.50px;top:409.78px;font-size:13.5px;line-height:15.079px;color:#000;transform:scaleX(1.0183);transform-origin:0 0;white-space:pre;">Inbound Receipts</div>
<div style="left:43.50px;top:429.78px;font-size:13.5px;line-height:15.079px;color:#000;transform:scaleX(1.0455);transform-origin:0 0;white-space:pre;">Outbound shipping</div>
<div style="left:620.45px;top:451.42px;font-size:12.8px;line-height:14.298px;color:#000;font-weight:bold;white-space:pre;">Balance</div>
<div style="left:707.45px;top:451.42px;font-size:12.8px;line-height:14.298px;color:#000;font-weight:bold;white-space:pre;">Balance</div>
<div style="left:783.95px;top:451.42px;font-size:12.8px;line-height:14.298px;color:#000;font-weight:bold;white-space:pre;">Balance</div>
<div style="left:176.00px;top:491.42px;font-size:12.8px;line-height:14.298px;color:#000;font-weight:bold;white-space:pre;">Extra Comments</div>
<div style="left:1345px;top:207px;width:21px;height:471px;background:#e6e6e6;"></div>
<div style="left:1344px;top:227px;width:1px;height:451px;background:#a0a0a0;"></div>
<div style="left:1348px;top:643px;width:15px;height:21px;background:#d9d9d9;"></div>
<div style="left:1348px;top:209px;width:15px;height:15px;background:#fff;border:1px solid #5a5a5a;"></div>
<svg style="position:absolute;left:1350px;top:213px;" width="11" height="6" viewBox="0 0 11 6"><path d="M1 5h9l-4.5-4z" fill="#555"/></svg>
<div style="left:1348px;top:223px;width:15px;height:420px;background:#fff;border:1px solid #5a5a5a;"></div>
<div style="left:1348px;top:664px;width:15px;height:15px;background:#fff;border:1px solid #5a5a5a;"></div>
<svg style="position:absolute;left:1350px;top:668px;" width="11" height="6" viewBox="0 0 11 6"><path d="M1 1h9l-4.5 4z" fill="#555"/></svg>
<svg style="position:absolute;left:16px;top:70px;" width="32" height="34" viewBox="0 0 32 34"><rect x="2.7" y="6.7" width="19.5" height="22.5" fill="#fdf6e8" stroke="#d49a3c" stroke-width="1.3"/><path d="M6.6 9.5v-3h3.2a2.8 2.8 0 0 1 5.6 0h3.2v3z" fill="#fff" stroke="#6a6a6a" stroke-width="1"/><rect x="15.4" y="14.2" width="13.4" height="17.2" fill="#fff" stroke="#333" stroke-width="1.3"/></svg>
<div style="left:15.00px;top:106.23px;font-size:13px;line-height:14.521px;color:#262626;transform:scaleX(0.8423);transform-origin:0 0;white-space:pre;">Paste</div>
<svg style="position:absolute;left:25px;top:125px;" width="8" height="6" viewBox="0 0 8 6"><path d="M1 1l3 3 3-3" fill="none" stroke="#444" stroke-width="1.1"/></svg>
<svg style="position:absolute;left:54px;top:70px;" width="16" height="18" viewBox="0 0 16 18"><path d="M4.5 2l5.5 11 M10.5 2l-5.5 11" stroke="#555" stroke-width="1.1"/><circle cx="4" cy="15" r="2" fill="#fff" stroke="#3d8fd1" stroke-width="1.1"/><circle cx="10.5" cy="15" r="2" fill="#fff" stroke="#3d8fd1" stroke-width="1.1"/></svg>
<svg style="position:absolute;left:48px;top:90px;" width="40" height="46" viewBox="0 0 40 46"><path d="M12 5.5h-6.5v13h4" fill="none" stroke="#333" stroke-width="1.2"/><path d="M11.5 8.5h5.5l4 3.8v8.7h-9.5z" fill="#fff" stroke="#333" stroke-width="1.2"/><path d="M16.5 8.5v4h4.5" fill="none" stroke="#333" stroke-width="1"/><path d="M14 15.6h4 M14 17.8h4" stroke="#444" stroke-width="0.9"/></svg>
<svg style="position:absolute;left:74px;top:100px;" width="8" height="6" viewBox="0 0 8 6"><path d="M1 1l3 3 3-3" fill="none" stroke="#444" stroke-width="1.1"/></svg>
<svg style="position:absolute;left:48px;top:110px;" width="30" height="30" viewBox="0 0 30 30"><path d="M11.5 14l5.5 5.5-4 4.5c-2 1.2-4.5 0.5-6-1.5z" fill="#f4b04a" stroke="#d08a2c" stroke-width="0.8"/><path d="M11 13.5l6.5 6.5" stroke="#444" stroke-width="1.4"/><path d="M14.5 16.5l6-7" stroke="#444" stroke-width="3.4" stroke-linecap="round"/><path d="M14.5 16.5l6-7" stroke="#fff" stroke-width="1.4" stroke-linecap="round"/></svg>
<div style="left:15.00px;top:146.04px;font-size:11px;line-height:12.287px;color:#444444;transform:scaleX(1.0619);transform-origin:0 0;white-space:pre;">Clipboard</div>
<svg style="position:absolute;left:84px;top:148px;" width="9" height="9" viewBox="0 0 9 9"><path d="M0.5 0.5h5 M0.5 0.5v5 M2.5 2.5l6 6 M8.5 4v4.5h-4.5" fill="none" stroke="#605e5c" stroke-width="1"/></svg>
<div style="left:95px;top:68px;width:1px;height:88px;background:#c8c6c4;"></div>
<div style="left:104px;top:76px;width:123px;height:23px;background:#fff;border:1px solid #c8c6c4;"></div>
<div style="left:107.00px;top:82.23px;font-size:13px;line-height:14.521px;color:#262626;transform:scaleX(0.9228);transform-origin:0 0;white-space:pre;">Calibri</div>
<svg style="position:absolute;left:216px;top:85px;" width="8" height="6" viewBox="0 0 8 6"><path d="M1 1l3 3 3-3" fill="none" stroke="#444" stroke-width="1.1"/></svg>
<div style="left:229px;top:76px;width:44px;height:23px;background:#fff;border:1px solid #c8c6c4;"></div>
<div style="left:233.00px;top:82.23px;font-size:13px;line-height:14.521px;color:#262626;transform:scaleX(0.7410);transform-origin:0 0;white-space:pre;">11</div>
<svg style="position:absolute;left:261px;top:85px;" width="8" height="6" viewBox="0 0 8 6"><path d="M1 1l3 3 3-3" fill="none" stroke="#444" stroke-width="1.1"/></svg>
<div style="left:278.00px;top:76.71px;font-size:18px;line-height:20.106px;color:#333;transform:scaleX(1.0827);transform-origin:0 0;white-space:pre;font-weight:300;">A</div>
<svg style="position:absolute;left:291px;top:79px;" width="7" height="5" viewBox="0 0 7 5"><path d="M1 4l2.5-3 2.5 3" fill="none" stroke="#2b88d8" stroke-width="1"/></svg>
<div style="left:303.00px;top:80.33px;font-size:14px;line-height:15.638px;color:#333;transform:scaleX(1.0708);transform-origin:0 0;white-space:pre;">A</div>
<svg style="position:absolute;left:314px;top:79px;" width="7" height="5" viewBox="0 0 7 5"><path d="M1 1l2.5 3 2.5-3" fill="none" stroke="#2b88d8" stroke-width="1"/></svg>
<div style="left:112.00px;top:111.33px;font-size:14px;line-height:15.638px;color:#333;font-weight:bold;transform:scaleX(0.7912);transform-origin:0 0;white-space:pre;">B</div>
<div style="left:136.00px;top:111.33px;font-size:14px;line-height:15.638px;color:#333;transform:scaleX(1.2856);transform-origin:0 0;white-space:pre;font-style:italic;font-family:'Liberation Serif',serif;">I</div>
<div style="left:158.00px;top:111.33px;font-size:14px;line-height:15.638px;color:#333;transform:scaleX(0.8902);transform-origin:0 0;white-space:pre;">U</div>
<div style="left:158px;top:126px;width:9px;height:1px;background:#333;"></div>
<svg style="position:absolute;left:177px;top:116px;" width="8" height="6" viewBox="0 0 8 6"><path d="M1 1l3 3 3-3" fill="none" stroke="#444" stroke-width="1.1"/></svg>
<div style="left:194px;top:107px;width:1px;height:23px;background:#c8c6c4;"></div>
<svg style="position:absolute;left:200px;top:110px;" width="17" height="18" viewBox="0 0 17 18"><rect x="1" y="1" width="1" height="1" fill="#333"/><rect x="1" y="3" width="1" height="1" fill="#333"/><rect x="1" y="5" width="1" height="1" fill="#333"/><rect x="1" y="7" width="1" height="1" fill="#333"/><rect x="1" y="8" width="1" height="1" fill="#333"/><rect x="1" y="9" width="1" height="1" fill="#333"/><rect x="1" y="11" width="1" height="1" fill="#333"/><rect x="1" y="13" width="1" height="1" fill="#333"/><rect x="1" y="15" width="1" height="1" fill="#333"/><rect x="3" y="1" width="1" height="1" fill="#333"/><rect x="3" y="8" width="1" height="1" fill="#333"/><rect x="5" y="1" width="1" height="1" fill="#333"/><rect x="5" y="8" width="1" height="1" fill="#333"/><rect x="7" y="1" width="1" height="1" fill="#333"/><rect x="7" y="8" width="1" height="1" fill="#333"/><rect x="8" y="1" width="1" height="1" fill="#333"/><rect x="8" y="3" width="1" height="1" fill="#333"/><rect x="8" y="5" width="1" height="1" fill="#333"/><rect x="8" y="7" width="1" height="1" fill="#333"/><rect x="8" y="9" width="1" height="1" fill="#333"/><rect x="8" y="11" width="1" height="1" fill="#333"/><rect x="8" y="13" width="1" height="1" fill="#333"/><rect x="8" y="15" width="1" height="1" fill="#333"/><rect x="9" y="1" width="1" height="1" fill="#333"/><rect x="9" y="8" width="1" height="1" fill="#333"/><rect x="11" y="1" width="1" height="1" fill="#333"/><rect x="11" y="8" width="1" height="1" fill="#333"/><rect x="13" y="1" width="1" height="1" fill="#333"/><rect x="13" y="8" width="1" height="1" fill="#333"/><rect x="15" y="1" width="1" height="1" fill="#333"/><rect x="15" y="3" width="1" height="1" fill="#333"/><rect x="15" y="5" width="1" height="1" fill="#333"/><rect x="15" y="7" width="1" height="1" fill="#333"/><rect x="15" y="8" width="1" height="1" fill="#333"/><rect x="15" y="9" width="1" height="1" fill="#333"/><rect x="15" y="11" width="1" height="1" fill="#333"/><rect x="15" y="13" width="1" height="1" fill="#333"/><rect x="15" y="15" width="1" height="1" fill="#333"/><path d="M1 16.5h15" stroke="#222" stroke-width="1.3"/></svg>
<svg style="position:absolute;left:223px;top:116px;" width="8" height="6" viewBox="0 0 8 6"><path d="M1 1l3 3 3-3" fill="none" stroke="#444" stroke-width="1.1"/></svg>
<div style="left:239px;top:107px;width:1px;height:23px;background:#c8c6c4;"></div>
<svg style="position:absolute;left:245px;top:109px;" width="20" height="19" viewBox="0 0 20 19"><path d="M5 9l5-6 5 5-5 5z" fill="none" stroke="#333" stroke-width="1.1"/><path d="M12 4c2 0 3 2 2 4" fill="none" stroke="#2b88d8" stroke-width="1.3"/><rect x="1" y="14" width="17" height="4" fill="#ffff00"/></svg>
<svg style="position:absolute;left:269px;top:116px;" width="8" height="6" viewBox="0 0 8 6"><path d="M1 1l3 3 3-3" fill="none" stroke="#444" stroke-width="1.1"/></svg>
<svg style="position:absolute;left:286px;top:109px;" width="16" height="14" viewBox="0 0 16 14"><path d="M4 12.5L8 1.8L12 12.5 M5.4 8.8h5.2" fill="none" stroke="#333" stroke-width="1.2"/></svg>
<div style="left:286px;top:123px;width:16px;height:4px;background:#e00000;"></div>
<svg style="position:absolute;left:308px;top:116px;" width="8" height="6" viewBox="0 0 8 6"><path d="M1 1l3 3 3-3" fill="none" stroke="#444" stroke-width="1.1"/></svg>
<div style="left:191.00px;top:146.04px;font-size:11px;line-height:12.287px;color:#444444;transform:scaleX(1.0904);transform-origin:0 0;white-space:pre;">Font</div>
<svg style="position:absolute;left:316px;top:148px;" width="9" height="9" viewBox="0 0 9 9"><path d="M0.5 0.5h5 M0.5 0.5v5 M2.5 2.5l6 6 M8.5 4v4.5h-4.5" fill="none" stroke="#605e5c" stroke-width="1"/></svg>
<div style="left:327px;top:68px;width:1px;height:88px;background:#c8c6c4;"></div>
<svg style="position:absolute;left:340px;top:79px;" width="16" height="12.5" viewBox="0 0 16 12.5"><path d="M1 1.5h13" stroke="#333" stroke-width="1"/><path d="M3 5.0h9" stroke="#333" stroke-width="1"/><path d="M1 8.5h13" stroke="#333" stroke-width="1"/></svg>
<svg style="position:absolute;left:364px;top:83px;" width="16" height="12.5" viewBox="0 0 16 12.5"><path d="M1 1.5h13" stroke="#333" stroke-width="1"/><path d="M3 5.0h9" stroke="#333" stroke-width="1"/><path d="M1 8.5h13" stroke="#333" stroke-width="1"/></svg>
<div style="left:384px;top:76px;width:22px;height:23px;background:#c8c6c4;border:1px solid #a19f9d;"></div>
<svg style="position:absolute;left:388px;top:86px;" width="16" height="12.5" viewBox="0 0 16 12.5"><path d="M1 1.5h13" stroke="#333" stroke-width="1"/><path d="M3 5.0h9" stroke="#333" stroke-width="1"/><path d="M1 8.5h13" stroke="#333" stroke-width="1"/></svg>
<div style="left:411px;top:77px;width:1px;height:21px;background:#c8c6c4;"></div>
<svg style="position:absolute;left:414px;top:74px;" width="24" height="24" viewBox="0 0 24 24"><text x="1" y="14" font-size="11.5" font-family="Liberation Sans" fill="#333" transform="rotate(-45 8 10)">ab</text><path d="M9.5 19.5l10-10.5 M14.5 8.5h5.2v5.2" fill="none" stroke="#3a8bc8" stroke-width="1.2"/></svg>
<svg style="position:absolute;left:437px;top:84px;" width="8" height="6" viewBox="0 0 8 6"><path d="M1 1l3 3 3-3" fill="none" stroke="#444" stroke-width="1.1"/></svg>
<div style="left:465px;top:72px;width:1px;height:61px;background:#c8c6c4;"></div>
<svg style="position:absolute;left:474px;top:76px;" width="18" height="20" viewBox="0 0 18 20"><text x="0.5" y="10.5" font-size="11" font-family="Liberation Sans" fill="#333" letter-spacing="-0.5">ab</text><text x="1" y="17.5" font-size="10" font-family="Liberation Sans" fill="#333">c</text><path d="M14.5 12c0 2.5-2 3.6-6.5 3.6 M9.8 13.6l-2 2 2 2" fill="none" stroke="#3a8bc8" stroke-width="1.2"/></svg>
<div style="left:493.00px;top:82.23px;font-size:13px;line-height:14.521px;color:#262626;transform:scaleX(0.8786);transform-origin:0 0;white-space:pre;">Wrap Text</div>
<svg style="position:absolute;left:340px;top:113px;" width="16" height="18" viewBox="0 0 16 18"><path d="M1 1.5h13" stroke="#333" stroke-width="1"/><path d="M1 5.5h9" stroke="#333" stroke-width="1"/><path d="M1 9.5h13" stroke="#333" stroke-width="1"/><path d="M1 13.5h9" stroke="#333" stroke-width="1"/></svg>
<svg style="position:absolute;left:364px;top:113px;" width="16" height="18" viewBox="0 0 16 18"><path d="M1 1.5h13" stroke="#333" stroke-width="1"/><path d="M3 5.5h9" stroke="#333" stroke-width="1"/><path d="M1 9.5h13" stroke="#333" stroke-width="1"/><path d="M3 13.5h9" stroke="#333" stroke-width="1"/></svg>
<svg style="position:absolute;left:388px;top:113px;" width="16" height="18" viewBox="0 0 16 18"><path d="M1 1.5h13" stroke="#333" stroke-width="1"/><path d="M5 5.5h9" stroke="#333" stroke-width="1"/><path d="M1 9.5h13" stroke="#333" stroke-width="1"/><path d="M5 13.5h9" stroke="#333" stroke-width="1"/></svg>
<div style="left:411px;top:108px;width:1px;height:22px;background:#c8c6c4;"></div>
<svg style="position:absolute;left:418px;top:111px;" width="16" height="16" viewBox="0 0 16 16"><path d="M1 1.5h14 M7 5.5h8 M7 9.5h8 M1 13.5h14" stroke="#333" stroke-width="1"/><path d="M5.5 7.5h-4.5 M3 5.5l-2 2 2 2" fill="none" stroke="#2b88d8" stroke-width="1.1"/></svg>
<svg style="position:absolute;left:442px;top:111px;" width="16" height="16" viewBox="0 0 16 16"><path d="M1 1.5h14 M7 5.5h8 M7 9.5h8 M1 13.5h14" stroke="#333" stroke-width="1"/><path d="M0.5 7.5h5 M3.5 5.5l2 2-2 2" fill="none" stroke="#2b88d8" stroke-width="1.1"/></svg>
<svg style="position:absolute;left:472px;top:110px;" width="17" height="17" viewBox="0 0 17 17"><rect x="1.5" y="1.5" width="14" height="14" fill="none" stroke="#333" stroke-width="1"/><path d="M1.5 4.5h14 M1.5 12.5h14" stroke="#333" stroke-width="1"/><path d="M3.5 8.5h10 M5.5 6.5l-2 2 2 2 M11.5 6.5l2 2-2 2" fill="none" stroke="#2b88d8" stroke-width="1.1"/></svg>
<div style="left:493.00px;top:114.23px;font-size:13px;line-height:14.521px;color:#262626;transform:scaleX(0.9154);transform-origin:0 0;white-space:pre;">Merge &amp; Center</div>
<svg style="position:absolute;left:586px;top:116px;" width="8" height="6" viewBox="0 0 8 6"><path d="M1 1l3 3 3-3" fill="none" stroke="#444" stroke-width="1.1"/></svg>
<div style="left:433.00px;top:146.04px;font-size:11px;line-height:12.287px;color:#444444;transform:scaleX(1.0835);transform-origin:0 0;white-space:pre;">Alignment</div>
<svg style="position:absolute;left:596px;top:148px;" width="9" height="9" viewBox="0 0 9 9"><path d="M0.5 0.5h5 M0.5 0.5v5 M2.5 2.5l6 6 M8.5 4v4.5h-4.5" fill="none" stroke="#605e5c" stroke-width="1"/></svg>
<div style="left:607px;top:68px;width:1px;height:88px;background:#c8c6c4;"></div>
<div style="left:616px;top:76px;width:140px;height:23px;background:#fff;border:1px solid #c8c6c4;"></div>
<div style="left:620.00px;top:82.23px;font-size:13px;line-height:14.521px;color:#262626;transform:scaleX(0.8432);transform-origin:0 0;white-space:pre;">General</div>
<svg style="position:absolute;left:745px;top:85px;" width="8" height="6" viewBox="0 0 8 6"><path d="M1 1l3 3 3-3" fill="none" stroke="#444" stroke-width="1.1"/></svg>
<div style="left:622.00px;top:111.61px;font-size:17px;line-height:18.989px;color:#333;transform:scaleX(0.9519);transform-origin:0 0;white-space:pre;">$</div>
<svg style="position:absolute;left:641px;top:116px;" width="8" height="6" viewBox="0 0 8 6"><path d="M1 1l3 3 3-3" fill="none" stroke="#444" stroke-width="1.1"/></svg>
<div style="left:658.00px;top:110.61px;font-size:17px;line-height:18.989px;color:#333;white-space:pre;">%</div>
<svg style="position:absolute;left:684px;top:111px;" width="12" height="16" viewBox="0 0 12 16"><circle cx="5.5" cy="5" r="3.6" fill="#262626"/><path d="M8.6 4.5c0.6 4-1.2 7-4.6 9" fill="none" stroke="#262626" stroke-width="2.2"/></svg>
<div style="left:705px;top:108px;width:1px;height:27px;background:#c8c6c4;"></div>
<svg style="position:absolute;left:712px;top:109px;" width="18" height="18" viewBox="0 0 18 18"><text x="7.5" y="8.5" font-size="10" font-family="Liberation Sans" fill="#333">.0</text><text x="3" y="17" font-size="10" font-family="Liberation Sans" fill="#333">.00</text><path d="M1 5h7 M3.5 2.5l-2.5 2.5 2.5 2.5" fill="none" stroke="#2b88d8" stroke-width="1.2"/></svg>
<svg style="position:absolute;left:735px;top:109px;" width="19" height="18" viewBox="0 0 19 18"><text x="3.5" y="8.5" font-size="10" font-family="Liberation Sans" fill="#333">.00</text><text x="10" y="17" font-size="10" font-family="Liberation Sans" fill="#333">.0</text><path d="M1 13h8 M6.5 10.5l2.5 2.5-2.5 2.5" fill="none" stroke="#2b88d8" stroke-width="1.2"/></svg>
<div style="left:657.00px;top:146.04px;font-size:11px;line-height:12.287px;color:#444444;transform:scaleX(1.0479);transform-origin:0 0;white-space:pre;">Number</div>
<svg style="position:absolute;left:751px;top:148px;" width="9" height="9" viewBox="0 0 9 9"><path d="M0.5 0.5h5 M0.5 0.5v5 M2.5 2.5l6 6 M8.5 4v4.5h-4.5" fill="none" stroke="#605e5c" stroke-width="1"/></svg>
<div style="left:763px;top:68px;width:1px;height:88px;background:#c8c6c4;"></div>
<svg style="position:absolute;left:790px;top:68px;" width="40" height="34" viewBox="0 0 40 34"><rect x="5.5" y="7.5" width="27" height="21" fill="#fff"/><rect x="10.5" y="7.5" width="12" height="7" fill="#f08080"/><rect x="10.5" y="21.5" width="13.5" height="7" fill="#f08080"/><rect x="10.5" y="14.5" width="7.5" height="7" fill="#6fa0d0"/><path d="M5.5 7.5h27v21h-27z M5.5 14.5h27 M5.5 21.5h27 M10.5 7.5v21 M22.5 7.5v7 M18 14.5v7 M24 21.5v7 M27.5 7.5v21" fill="none" stroke="#333" stroke-width="1"/></svg>
<div style="left:779.00px;top:106.23px;font-size:13px;line-height:14.521px;color:#262626;transform:scaleX(0.9378);transform-origin:0 0;white-space:pre;">Conditional</div>
<div style="left:774.00px;top:122.23px;font-size:13px;line-height:14.521px;color:#262626;transform:scaleX(0.9174);transform-origin:0 0;white-space:pre;">Formatting</div>
<svg style="position:absolute;left:835px;top:125px;" width="8" height="6" viewBox="0 0 8 6"><path d="M1 1l3 3 3-3" fill="none" stroke="#444" stroke-width="1.1"/></svg>
<svg style="position:absolute;left:855px;top:68px;" width="40" height="34" viewBox="0 0 40 34"><rect x="6.5" y="7.5" width="27" height="21" fill="#fff"/><rect x="15.5" y="14.5" width="18" height="14" fill="#6aaae4"/><path d="M6.5 7.5h27v21h-27z M6.5 14.5h27 M6.5 21.5h27 M15.5 7.5v21 M24.5 7.5v21" fill="none" stroke="#333" stroke-width="1"/><path d="M34.5 14.5L19 30" stroke="#444" stroke-width="3.6" stroke-linecap="round"/><path d="M34.5 14.5L19 30" stroke="#fff" stroke-width="1.6" stroke-linecap="round"/><path d="M21 27c-3 -1 -6 1 -6.5 5.5 c3 0.5 6.5 -1 6.5 -5.5z" fill="#5b9bd5" stroke="#3a70a8" stroke-width="0.6"/></svg>
<div style="left:850.00px;top:106.23px;font-size:13px;line-height:14.521px;color:#262626;transform:scaleX(0.8716);transform-origin:0 0;white-space:pre;">Format as</div>
<div style="left:857.00px;top:122.23px;font-size:13px;line-height:14.521px;color:#262626;transform:scaleX(0.9009);transform-origin:0 0;white-space:pre;">Table</div>
<svg style="position:absolute;left:885px;top:125px;" width="8" height="6" viewBox="0 0 8 6"><path d="M1 1l3 3 3-3" fill="none" stroke="#444" stroke-width="1.1"/></svg>
<svg style="position:absolute;left:907px;top:68px;" width="40" height="34" viewBox="0 0 40 34"><rect x="6.5" y="7.5" width="27" height="21" fill="#fff"/><rect x="11" y="12" width="18" height="11.5" fill="#6aaae4"/><path d="M6.5 7.5h27v21h-27z M6.5 11.5h27 M11 7.5v21 M6.5 24h27 M29 7.5v21" fill="none" stroke="#333" stroke-width="1"/><path d="M35 14.5L19 30" stroke="#444" stroke-width="3.6" stroke-linecap="round"/><path d="M35 14.5L19 30" stroke="#fff" stroke-width="1.6" stroke-linecap="round"/><path d="M21 27c-3 -1 -6 1 -6.5 5.5 c3 0.5 6.5 -1 6.5 -5.5z" fill="#5b9bd5" stroke="#3a70a8" stroke-width="0.6"/></svg>
<div style="left:918.00px;top:106.23px;font-size:13px;line-height:14.521px;color:#262626;transform:scaleX(0.8484);transform-origin:0 0;white-space:pre;">Cell</div>
<div style="left:906.00px;top:122.23px;font-size:13px;line-height:14.521px;color:#262626;transform:scaleX(0.8474);transform-origin:0 0;white-space:pre;">Styles</div>
<svg style="position:absolute;left:937px;top:125px;" width="8" height="6" viewBox="0 0 8 6"><path d="M1 1l3 3 3-3" fill="none" stroke="#444" stroke-width="1.1"/></svg>
<div style="left:846.00px;top:146.04px;font-size:11px;line-height:12.287px;color:#444444;transform:scaleX(0.9347);transform-origin:0 0;white-space:pre;">Styles</div>
<div style="left:957px;top:68px;width:1px;height:88px;background:#c8c6c4;"></div>
<svg style="position:absolute;left:969px;top:71px;" width="17" height="15" viewBox="0 0 17 15"><rect x="0.5" y="0.5" width="15" height="13" fill="#fff" stroke="#333"/><path d="M0.5 4.5h15 M0.5 9.5h15 M5.5 0.5v13 M10.5 0.5v13" stroke="#333" stroke-width="1"/><rect x="6" y="5" width="9" height="4" fill="#6aa4d8"/><path d="M9 7h-8 M3 5l-2 2 2 2" fill="none" stroke="#2b88d8" stroke-width="1.1"/></svg>
<div style="left:988.00px;top:73.23px;font-size:13px;line-height:14.521px;color:#262626;transform:scaleX(0.8612);transform-origin:0 0;white-space:pre;">Insert</div>
<svg style="position:absolute;left:1027px;top:76px;" width="8" height="6" viewBox="0 0 8 6"><path d="M1 1l3 3 3-3" fill="none" stroke="#444" stroke-width="1.1"/></svg>
<svg style="position:absolute;left:969px;top:94px;" width="17" height="15" viewBox="0 0 17 15"><rect x="0.5" y="0.5" width="15" height="13" fill="#fff" stroke="#333"/><path d="M0.5 4.5h15 M0.5 9.5h15 M5.5 0.5v13 M10.5 0.5v13" stroke="#333" stroke-width="1"/><rect x="1" y="5" width="9" height="4" fill="#6aa4d8"/><path d="M10 4.5l5 5 M15 4.5l-5 5" stroke="#e81123" stroke-width="1.2"/></svg>
<div style="left:988.00px;top:96.23px;font-size:13px;line-height:14.521px;color:#262626;transform:scaleX(0.8781);transform-origin:0 0;white-space:pre;">Delete</div>
<svg style="position:absolute;left:1031px;top:99px;" width="8" height="6" viewBox="0 0 8 6"><path d="M1 1l3 3 3-3" fill="none" stroke="#444" stroke-width="1.1"/></svg>
<svg style="position:absolute;left:969px;top:117px;" width="17" height="15" viewBox="0 0 17 15"><rect x="0.5" y="0.5" width="15" height="13" fill="#fff" stroke="#333"/><path d="M0.5 4.5h15 M0.5 9.5h15 M5.5 0.5v13 M10.5 0.5v13" stroke="#333" stroke-width="1"/><rect x="6" y="5" width="4" height="4" fill="#6aa4d8"/></svg>
<div style="left:988.00px;top:119.23px;font-size:13px;line-height:14.521px;color:#262626;transform:scaleX(0.9229);transform-origin:0 0;white-space:pre;">Format</div>
<svg style="position:absolute;left:1028px;top:122px;" width="8" height="6" viewBox="0 0 8 6"><path d="M1 1l3 3 3-3" fill="none" stroke="#444" stroke-width="1.1"/></svg>
<div style="left:992.00px;top:146.04px;font-size:11px;line-height:12.287px;color:#444444;transform:scaleX(0.9816);transform-origin:0 0;white-space:pre;">Cells</div>
<div style="left:1051px;top:68px;width:1px;height:88px;background:#c8c6c4;"></div>
<svg style="position:absolute;left:1064px;top:71px;" width="15" height="15" viewBox="0 0 15 15"><path d="M13 2.5h-11.5l6 5.5-6 5.5h11.5" fill="none" stroke="#333" stroke-width="1.2"/></svg>
<svg style="position:absolute;left:1085px;top:76px;" width="8" height="6" viewBox="0 0 8 6"><path d="M1 1l3 3 3-3" fill="none" stroke="#444" stroke-width="1.1"/></svg>
<svg style="position:absolute;left:1063px;top:93px;" width="17" height="16" viewBox="0 0 17 16"><rect x="0.5" y="0.5" width="15" height="14" fill="#fff" stroke="#333"/><path d="M0.5 3.5h15" stroke="#333"/><path d="M8 6v6 M5.5 9.5l2.5 2.5 2.5-2.5" fill="none" stroke="#2b88d8" stroke-width="1.2"/></svg>
<svg style="position:absolute;left:1083px;top:99px;" width="8" height="6" viewBox="0 0 8 6"><path d="M1 1l3 3 3-3" fill="none" stroke="#444" stroke-width="1.1"/></svg>
<svg style="position:absolute;left:1063px;top:117px;" width="16" height="16" viewBox="0 0 16 16"><path d="M2 10l7-7 6 6-7 7z" fill="#fff" stroke="#b146c2" stroke-width="1.1"/><path d="M2 10l3.5-3.5 6 6-3.5 3.5z" fill="#d59ae0" stroke="#b146c2" stroke-width="1.1"/></svg>
<svg style="position:absolute;left:1083px;top:122px;" width="8" height="6" viewBox="0 0 8 6"><path d="M1 1l3 3 3-3" fill="none" stroke="#444" stroke-width="1.1"/></svg>
<svg style="position:absolute;left:1103px;top:71px;" width="32" height="30" viewBox="0 0 32 30"><text x="1" y="13" font-size="14" font-family="Liberation Sans" fill="#2b88d8">A</text><text x="1" y="28" font-size="14" font-family="Liberation Sans" fill="#333">Z</text><path d="M14 8.5h16l-6 7v7l-4 2v-9z" fill="none" stroke="#333" stroke-width="1.2"/></svg>
<div style="left:1102.00px;top:106.23px;font-size:13px;line-height:14.521px;color:#262626;transform:scaleX(0.9412);transform-origin:0 0;white-space:pre;">Sort &amp;</div>
<div style="left:1100.00px;top:122.23px;font-size:13px;line-height:14.521px;color:#262626;transform:scaleX(0.9346);transform-origin:0 0;white-space:pre;">Filter</div>
<svg style="position:absolute;left:1128px;top:125px;" width="8" height="6" viewBox="0 0 8 6"><path d="M1 1l3 3 3-3" fill="none" stroke="#444" stroke-width="1.1"/></svg>
<svg style="position:absolute;left:1147px;top:71px;" width="32" height="30" viewBox="0 0 32 30"><circle cx="20" cy="11" r="9.5" fill="#fff" stroke="#333" stroke-width="1.2"/><path d="M13.5 18l-11 11" stroke="#333" stroke-width="1.3"/></svg>
<div style="left:1145.00px;top:106.23px;font-size:13px;line-height:14.521px;color:#262626;transform:scaleX(0.9581);transform-origin:0 0;white-space:pre;">Find &amp;</div>
<div style="left:1142.00px;top:122.23px;font-size:13px;line-height:14.521px;color:#262626;transform:scaleX(0.8856);transform-origin:0 0;white-space:pre;">Select</div>
<svg style="position:absolute;left:1174px;top:125px;" width="8" height="6" viewBox="0 0 8 6"><path d="M1 1l3 3 3-3" fill="none" stroke="#444" stroke-width="1.1"/></svg>
<div style="left:1104.00px;top:146.04px;font-size:11px;line-height:12.287px;color:#444444;transform:scaleX(1.1000);transform-origin:0 0;white-space:pre;">Editing</div>
<div style="left:1194px;top:68px;width:1px;height:88px;background:#c8c6c4;"></div>
<svg style="position:absolute;left:1209px;top:70px;" width="34" height="32" viewBox="0 0 34 32"><rect x="1" y="1" width="31" height="29" fill="#fff" stroke="#333" stroke-width="1.3"/><path d="M1 5h31" stroke="#555" stroke-width="2"/><path d="M1 12h31 M1 19h31 M1 25h31 M9 5v25 M17 5v25 M25 5v25" stroke="#999" stroke-width="0.9"/><circle cx="16" cy="15" r="8" fill="#fff" stroke="#333" stroke-width="1.5"/><rect x="12" y="14" width="2.5" height="5" fill="#999"/><rect x="15" y="11" width="2.5" height="8" fill="#6aa4d8"/><rect x="18" y="13" width="2.5" height="6" fill="#999"/><path d="M22 21l9 9" stroke="#333" stroke-width="1.8"/></svg>
<div style="left:1205.00px;top:106.23px;font-size:13px;line-height:14.521px;color:#262626;transform:scaleX(0.8865);transform-origin:0 0;white-space:pre;">Analyze</div>
<div style="left:1214.00px;top:122.23px;font-size:13px;line-height:14.521px;color:#262626;transform:scaleX(0.8740);transform-origin:0 0;white-space:pre;">Data</div>
<div style="left:1205.00px;top:146.04px;font-size:11px;line-height:12.287px;color:#444444;transform:scaleX(0.9765);transform-origin:0 0;white-space:pre;">Analysis</div>
<div style="left:1256px;top:68px;width:1px;height:88px;background:#c8c6c4;"></div>
<svg style="position:absolute;left:1281px;top:71px;" width="32" height="30" viewBox="0 0 32 30"><path d="M3.5 1.5h16v27h-16z" fill="#f0f0f0" stroke="#bdbdbd" stroke-width="1"/><path d="M9 22l14-14 4 4-14 14z" fill="#f3f2f1" stroke="#bdbdbd" stroke-width="1.2"/><path d="M21 5l4-4 5 5-4 4z" fill="#f3f2f1" stroke="#bdbdbd" stroke-width="1.2"/></svg>
<div style="left:1267.00px;top:106.23px;font-size:13px;line-height:14.521px;color:#a6a6a6;transform:scaleX(0.9057);transform-origin:0 0;white-space:pre;">Sensitivity</div>
<svg style="position:absolute;left:1289px;top:124px;" width="8" height="6" viewBox="0 0 8 6"><path d="M1 1l3 3 3-3" fill="none" stroke="#b0b0b0" stroke-width="1.1"/></svg>
<div style="left:1268.00px;top:146.04px;font-size:11px;line-height:12.287px;color:#444444;transform:scaleX(1.0299);transform-origin:0 0;white-space:pre;">Sensitivity</div>
<div style="left:1330px;top:68px;width:1px;height:88px;background:#c8c6c4;"></div>
<svg style="position:absolute;left:1346px;top:149px;" width="12" height="8" viewBox="0 0 12 8"><path d="M1 6l5-5 5 5" fill="none" stroke="#444" stroke-width="1.2"/></svg>
<div style="left:0px;top:679px;width:1366px;height:27px;background:#e6e6e6;"></div>
<div style="left:0px;top:678px;width:1345px;height:1px;background:#9a9a9a;"></div>
<svg style="position:absolute;left:26px;top:686px;" width="8" height="10" viewBox="0 0 8 10"><path d="M6 1v8l-5-4z" fill="#c4c4c4"/></svg>
<svg style="position:absolute;left:54px;top:686px;" width="8" height="10" viewBox="0 0 8 10"><path d="M2 1v8l5-4z" fill="#c4c4c4"/></svg>
<div style="left:100px;top:678px;width:150px;height:25px;background:#ffffff;border-left:1px solid #c8c8c8;border-right:1px solid #c8c8c8;"></div>
<div style="left:100px;top:701px;width:150px;height:2px;background:#1d6a41;"></div>
<div style="left:112.00px;top:684.24px;font-size:13px;line-height:14.521px;color:#1e6e42;font-weight:bold;transform:scaleX(0.9762);transform-origin:0 0;white-space:pre;">Work Balancing Calc</div>
<svg style="position:absolute;left:282px;top:683px;" width="18" height="18" viewBox="0 0 18 18"><circle cx="9" cy="9" r="7" fill="none" stroke="#7a7a7a" stroke-width="1.2"/><path d="M9 5v8 M5 9h8" stroke="#7a7a7a" stroke-width="1.3"/></svg>
<div style="left:819px;top:687px;width:2px;height:2px;background:#a6a6a6;"></div>
<div style="left:819px;top:691px;width:2px;height:2px;background:#a6a6a6;"></div>
<div style="left:819px;top:695px;width:2px;height:2px;background:#a6a6a6;"></div>
<div style="left:851px;top:684px;width:479px;height:16px;background:#d9d9d9;"></div>
<div style="left:836px;top:685px;width:16px;height:15px;background:#fff;border:1px solid #5a5a5a;"></div>
<svg style="position:absolute;left:840px;top:689px;" width="8" height="8" viewBox="0 0 8 8"><path d="M6 0.5v7l-4.5-3.5z" fill="#555"/></svg>
<div style="left:851px;top:685px;width:428px;height:15px;background:#fff;border:1px solid #5a5a5a;"></div>
<div style="left:1330px;top:685px;width:15px;height:15px;background:#fff;border:1px solid #5a5a5a;"></div>
<svg style="position:absolute;left:1334px;top:689px;" width="8" height="8" viewBox="0 0 8 8"><path d="M2 0.5v7l4.5-3.5z" fill="#555"/></svg>
<div style="left:0px;top:706px;width:1366px;height:22px;background:#f3f2f1;"></div>
<div style="left:0px;top:706px;width:1366px;height:1px;background:#c4c4c4;"></div>
<div style="left:7.00px;top:712.14px;font-size:12px;line-height:13.404px;color:#3a3a3a;transform:scaleX(0.8937);transform-origin:0 0;white-space:pre;">Ready</div>
<svg style="position:absolute;left:57px;top:709px;" width="16" height="16" viewBox="0 0 16 16"><g fill="none" stroke="#444" stroke-width="1.1"><circle cx="7.5" cy="3" r="2.2"/><path d="M1.5 5.5c2 1 4 1.2 6 1.2s4-0.2 6-1.2 M5 7v3l-2 4.5 M10 7v2.5"/><path d="M8.5 9.5l5.5 5.5 M14 9.5l-5.5 5.5"/></g></svg>
<div style="left:76.00px;top:711.64px;font-size:12px;line-height:13.404px;color:#3a3a3a;transform:scaleX(0.9457);transform-origin:0 0;white-space:pre;">Accessibility: Investigate</div>
<div style="left:1067px;top:707px;width:39px;height:21px;background:#d6d6d6;"></div>
<svg style="position:absolute;left:1078px;top:710px;" width="14" height="14" viewBox="0 0 14 14"><path d="M1 1h12v12h-12z M1 5h12 M1 9h12 M5 1v12 M9 1v12" fill="none" stroke="#444" stroke-width="1.3"/></svg>
<svg style="position:absolute;left:1118px;top:710px;" width="16" height="15" viewBox="0 0 16 15"><rect x="1.5" y="1.5" width="13" height="12" fill="none" stroke="#444" stroke-width="1.1"/><rect x="4.5" y="3.5" width="7" height="8" fill="none" stroke="#444" stroke-width="1"/><path d="M6 5.5h4 M6 7.5h4 M6 9.5h4" stroke="#444" stroke-width="0.8"/></svg>
<svg style="position:absolute;left:1158px;top:710px;" width="16" height="15" viewBox="0 0 16 15"><rect x="1.5" y="1.5" width="13" height="12" fill="none" stroke="#444" stroke-width="1.1"/><path d="M5.5 1.5v6h4v-6" fill="none" stroke="#444" stroke-width="1"/></svg>
<div style="left:1190px;top:716px;width:8px;height:1px;background:#555;"></div>
<div style="left:1205px;top:716px;width:101px;height:1px;background:#7a7a7a;"></div>
<div style="left:1254px;top:712px;width:4px;height:11px;background:#666;"></div>
<div style="left:1309px;top:716px;width:9px;height:1px;background:#555;"></div>
<div style="left:1313px;top:712px;width:1px;height:9px;background:#555;"></div>
<div style="left:1331.00px;top:711.14px;font-size:12px;line-height:13.404px;color:#3a3a3a;transform:scaleX(0.8797);transform-origin:0 0;white-space:pre;">100%</div>
<div style="left:0px;top:728px;width:1366px;height:40px;background:#1d2a30;"></div>
<svg style="position:absolute;left:16px;top:740px;" width="16" height="17" viewBox="0 0 16 17"><path d="M0 2.2l6.6-0.9v6.4h-6.6z M7.4 1.2l8.6-1.2v7.7h-8.6z M0 8.5h6.6v6.4l-6.6-0.9z M7.4 8.5h8.6v7.7l-8.6-1.2z" fill="#fff"/></svg>
<div style="left:48px;top:728px;width:344px;height:40px;background:#f0f0f0;"></div>
<svg style="position:absolute;left:58px;top:738px;" width="22" height="22" viewBox="0 0 22 22"><circle cx="12.6" cy="7.5" r="5.2" fill="none" stroke="#222" stroke-width="1.3"/><path d="M8.8 11.3l-6.3 6.3" stroke="#222" stroke-width="1.4"/></svg>
<div style="left:88.00px;top:740.52px;font-size:16px;line-height:17.872px;color:#262626;transform:scaleX(0.9051);transform-origin:0 0;white-space:pre;">Type here to search</div>
<svg style="position:absolute;left:405px;top:738px;" width="22" height="20" viewBox="0 0 22 20"><rect x="3.5" y="5.5" width="11" height="8" fill="none" stroke="#fff" stroke-width="1.2"/><path d="M2 3.5h14 M2 15.5h14 M18.5 2v3 M18.5 8v3 M18.5 14v3" stroke="#fff" stroke-width="1.2"/></svg>
<svg style="position:absolute;left:455px;top:737px;" width="24" height="22" viewBox="0 0 24 22"><path d="M1 3h8l2 2h12v14h-22z" fill="#f3c54d"/><path d="M1 7h22v12h-22z" fill="#ffd968"/><path d="M7 19v-6h10v6h-3v-3h-4v3z" fill="#4a90c8"/></svg>
<div style="left:447px;top:766px;width:40px;height:2px;background:#85b9e6;"></div>
<svg style="position:absolute;left:503px;top:736px;" width="26" height="24" viewBox="0 0 26 24"><path d="M8 7v-3c0-2 10-2 10 0v3" fill="none" stroke="#4aa0e0" stroke-width="1.6"/><rect x="2" y="7" width="22" height="16" rx="3" fill="#f2f2f2"/><rect x="9" y="11" width="3.6" height="3.6" fill="#f25022"/><rect x="13.4" y="11" width="3.6" height="3.6" fill="#7fba00"/><rect x="9" y="15.4" width="3.6" height="3.6" fill="#00a4ef"/><rect x="13.4" y="15.4" width="3.6" height="3.6" fill="#ffb900"/></svg>
<svg style="position:absolute;left:552px;top:737px;" width="26" height="22" viewBox="0 0 26 22"><path d="M1 8l12-7 12 7v13h-24z" fill="#1f6fc5"/><path d="M1 8h24v13h-24z" fill="#3ca0e8"/><path d="M1 8l12 7 12-7z" fill="#e8f4fc"/></svg>
<div style="left:545px;top:766px;width:40px;height:2px;background:#85b9e6;"></div>
<svg style="position:absolute;left:601px;top:736px;" width="26" height="26" viewBox="0 0 26 26"><circle cx="13" cy="13" r="12" fill="#1a7fd4"/><path d="M25 12c0-6-5-11-12-11-5 0-9 3-11 7 2-2 5-3 8-3 6 0 10 4 10 7 0 2-2 3-5 3-2 0-3-1-3-1 0 3 3 6 7 6 4 0 6-3 6-8z" fill="#3ad28a"/><circle cx="14" cy="14" r="4.5" fill="#0f4e8a"/></svg>
<div style="left:593px;top:766px;width:42px;height:2px;background:#85b9e6;"></div>
<div style="left:643px;top:766px;width:40px;height:2px;background:#85b9e6;"></div>
<svg style="position:absolute;left:699px;top:736px;" width="26" height="26" viewBox="0 0 26 26"><rect x="8" y="2" width="17" height="22" rx="1.5" fill="#21a366"/><rect x="8" y="8" width="17" height="8" fill="#107c41"/><rect x="8" y="16" width="17" height="8" fill="#185c37"/><rect x="1" y="7" width="13" height="13" rx="1.5" fill="#107c41"/><path d="M4.5 10l6 7 M10.5 10l-6 7" stroke="#fff" stroke-width="1.8"/></svg>
<div style="left:692px;top:766px;width:40px;height:2px;background:#85b9e6;"></div>
<svg style="position:absolute;left:748px;top:736px;" width="26" height="26" viewBox="0 0 26 26"><rect x="8" y="2" width="17" height="22" rx="1.5" fill="#41a5ee"/><rect x="8" y="8" width="17" height="8" fill="#2b7cd3"/><rect x="8" y="16" width="17" height="8" fill="#185abd"/><rect x="1" y="7" width="13" height="13" rx="1.5" fill="#185abd"/><path d="M3.5 10l2 7 2-5 2 5 2-7" fill="none" stroke="#fff" stroke-width="1.4"/></svg>
<div style="left:741px;top:766px;width:40px;height:2px;background:#85b9e6;"></div>
<div style="left:786px;top:728px;width:48px;height:40px;background:#4b5459;"></div>
<svg style="position:absolute;left:796px;top:735px;" width="28" height="28" viewBox="0 0 28 28"><path d="M10 16A7.5 7.5 0 1 1 20 16" fill="none" stroke="#e0531f" stroke-width="3"/><path d="M14.5 3l-0.5 11 3.5 5" fill="none" stroke="#f2f2f2" stroke-width="2.2"/><circle cx="16.5" cy="21" r="2.6" fill="none" stroke="#4aa3e8" stroke-width="1.8"/><ellipse cx="8.5" cy="20.5" rx="3.5" ry="2.2" fill="#3a86d0"/></svg>
<div style="left:786px;top:766px;width:48px;height:2px;background:#9ac8ee;"></div>
<svg style="position:absolute;left:925px;top:737px;" width="24" height="22" viewBox="0 0 24 22"><circle cx="10" cy="11" r="9" fill="#f7c23b"/><path d="M9 17c0-3 2-5 5-5 2 0 3 1 4 2 3 0 5 1 5 3s-2 3-4 3h-7c-2 0-3-1-3-3z" fill="#dfe8f0"/></svg>
<div style="left:958.00px;top:741.42px;font-size:15px;line-height:16.755px;color:#fff;transform:scaleX(0.8828);transform-origin:0 0;white-space:pre;">-24°C</div>
<div style="left:1000.00px;top:741.42px;font-size:15px;line-height:16.755px;color:#fff;transform:scaleX(0.9368);transform-origin:0 0;white-space:pre;">Mostly sunny</div>
<svg style="position:absolute;left:1098px;top:742px;" width="15" height="10" viewBox="0 0 15 10"><path d="M1 8l6.5-6.5 6.5 6.5" fill="none" stroke="#fff" stroke-width="1.4"/></svg>
<svg style="position:absolute;left:1119px;top:741px;" width="20" height="12" viewBox="0 0 20 12"><path d="M5 11c-3 0-4-2-4-3.5s1.5-3 3-3c0-2 2-3.5 4.5-3.5s4 1.5 4.5 3c2.5 0 5 1 5 3.5s-2 3.5-4 3.5z" fill="#e8e8e8"/></svg>
<svg style="position:absolute;left:1143px;top:739px;" width="22" height="18" viewBox="0 0 22 18"><path d="M4 12c-2.5 0-3.5-1.5-3.5-3s1.5-2.8 3-2.8c0-2 1.8-3.5 4-3.5s4 1.5 4.5 3c2.5 0 4 1.3 4 3.3s-2 3-3.5 3z" fill="#2f7dd6"/><circle cx="15" cy="12" r="5" fill="#d8273a"/><path d="M13 10l4 4 M17 10l-4 4" stroke="#fff" stroke-width="1.2"/></svg>
<svg style="position:absolute;left:1168px;top:740px;" width="19" height="15" viewBox="0 0 19 15"><rect x="5.5" y="4.5" width="12" height="8" fill="none" stroke="#fff" stroke-width="1.2"/><rect x="8" y="7" width="6" height="3" fill="#fff"/><path d="M1 3h4 M1 6h4 M3 1v4 M3 6v5" stroke="#fff" stroke-width="1.1"/></svg>
<svg style="position:absolute;left:1194px;top:739px;" width="17" height="17" viewBox="0 0 17 17"><path d="M2 15a13 13 0 0 1 13-13 M5 15a10 10 0 0 1 10-10 M8 15a7 7 0 0 1 7-7 M11 15a4 4 0 0 1 4-4" fill="none" stroke="#fff" stroke-width="1.2"/><circle cx="14.5" cy="14.5" r="1.3" fill="#fff"/></svg>
<div style="left:1219.00px;top:741.24px;font-size:13px;line-height:14.521px;color:#fff;transform:scaleX(0.8164);transform-origin:0 0;white-space:pre;">ENG</div>
<div style="left:1257.00px;top:731.69px;font-size:12.5px;line-height:13.963px;color:#fff;transform:scaleX(0.9088);transform-origin:0 0;white-space:pre;">10:01 AM</div>
<div style="left:1257.50px;top:749.69px;font-size:12.5px;line-height:13.963px;color:#fff;transform:scaleX(0.9454);transform-origin:0 0;white-space:pre;">2/2/2022</div>
<svg style="position:absolute;left:1322px;top:736px;" width="30" height="30" viewBox="0 0 30 30"><path d="M3 4h16v13h-12l-4 4z" fill="#fff"/><path d="M6 7.5h10 M6 10.5h10 M6 13.5h7" stroke="#1d2a30" stroke-width="1.3"/><circle cx="18.5" cy="19.7" r="7.3" fill="#2b2f33" stroke="#8a8f93" stroke-width="1"/></svg>
<div style="left:1337.72px;top:750.45px;font-size:10px;line-height:11.170px;color:#fff;font-weight:bold;white-space:pre;">4</div>
</body></html>
